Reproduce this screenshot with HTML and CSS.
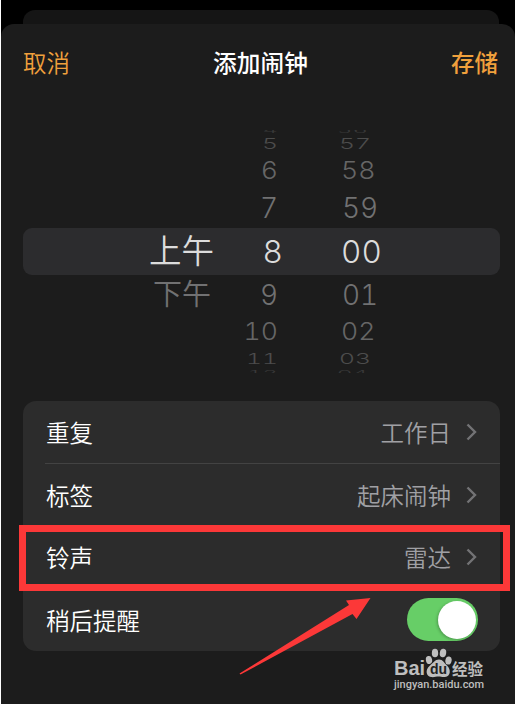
FILE: index.html
```html
<!DOCTYPE html>
<html lang="zh-CN">
<head>
    <meta charset="UTF-8">
    <title>添加闹钟</title>
    <link rel="stylesheet" href="styles.css">
</head>
<body>
<div class="screen">
    <div class="back-sheet"></div>
    <div class="sheet">
        <div class="nav">
            <a class="cancel">取消</a>
            <h1 class="title">添加闹钟</h1>
            <a class="save">存储</a>
        </div>
        <div class="picker">
            <div class="time d4 up"><span class="noon"></span><span class="hour">4</span><span class="minute">56</span></div>
            <div class="time d3"><span class="noon"></span><span class="hour">5</span><span class="minute">57</span></div>
            <div class="time d2"><span class="noon"></span><span class="hour">6</span><span class="minute">58</span></div>
            <div class="time d1"><span class="noon"></span><span class="hour">7</span><span class="minute">59</span></div>
            <div class="time now"><span class="noon">上午</span><span class="hour">8</span><span class="minute">00</span></div>
            <div class="time d1"><span class="noon">下午</span><span class="hour">9</span><span class="minute">01</span></div>
            <div class="time d2"><span class="noon"></span><span class="hour">10</span><span class="minute">02</span></div>
            <div class="time d3"><span class="noon"></span><span class="hour">11</span><span class="minute">03</span></div>
            <div class="time d4 down"><span class="noon"></span><span class="hour">12</span><span class="minute">04</span></div>
        </div>
        <div class="list">
            <div class="item">
                <span class="label">重复</span>
                <span class="value">工作日</span>
                <svg class="more" width="12" height="18" viewBox="0 0 12 18"><path d="M1.500 1.500L9 9L1.500 16.500"/></svg>
            </div>
            <div class="item">
                <span class="label">标签</span>
                <span class="value">起床闹钟</span>
                <svg class="more" width="12" height="18" viewBox="0 0 12 18"><path d="M1.500 1.500L9 9L1.500 16.500"/></svg>
            </div>
            <div class="item">
                <span class="label">铃声</span>
                <span class="value">雷达</span>
                <svg class="more" width="12" height="18" viewBox="0 0 12 18"><path d="M1.500 1.500L9 9L1.500 16.500"/></svg>
            </div>
            <div class="item">
                <span class="label">稍后提醒</span>
                <span class="switch"><i class="knob"></i></span>
            </div>
        </div>
    </div>
    <!-- 标注 -->
    <div class="mark"></div>
    <svg class="arrow" width="134" height="78" viewBox="0 0 134 78"><path d="M0.500 76.500L1.500 77.500L113.500 17L117.500 22L131.500 1L107 3.500L110 8Z"/></svg>
    <!-- 水印 -->
    <div class="watermark">
        <div class="logo">
            <span class="bai">Bai</span>
            <span class="paw">
                <svg width="27" height="30" viewBox="0 0 27 30">
                    <ellipse cx="4" cy="12" rx="3.100" ry="4" transform="rotate(-12 4 12)"/>
                    <ellipse cx="10" cy="5" rx="3.200" ry="4.300"/>
                    <ellipse cx="18" cy="5" rx="3.200" ry="4.300" transform="rotate(10 18 5)"/>
                    <ellipse cx="23.500" cy="12.500" rx="3.100" ry="4" transform="rotate(12 23.500 12.500)"/>
                    <path d="M14 11.500C18 11.500 19 15 22 17.500C26 21 26 28.500 20 29C17 29.300 16 28.500 13.500 28.500C11 28.500 9 29.500 6 29C1 28 0 22 4.500 18C8 15 10 11.500 14 11.500Z"/>
                </svg>
                <b class="du">du</b>
            </span>
            <span class="jingyan">经验</span>
        </div>
        <div class="url">jingyan.baidu.com</div>
    </div>
</div>
</body>
</html>
```

FILE: styles.css
```css
* {
    margin: 0;
    padding: 0;
    box-sizing: border-box;
}
body {
    background-color: #fff;
    font-family: "Noto Sans CJK SC", sans-serif;
}
.screen {
    position: relative;
    height: 704px;
    margin-left: 1px;
    padding-top: 10px;
    background-color: #000;
    overflow: hidden;
}
.back-sheet {
    height: 14px;
    margin: 0 16px 0 22px;
    border-radius: 12px 12px 0 0;
    background-color: #151515;
}
.sheet {
    height: 680px;
    padding: 0 15px 0 22px;
    border-radius: 13px 13px 0 0;
    background-color: #1c1c1c;
}
.nav {
    display: flex;
    justify-content: space-between;
    align-items: center;
    height: 75px;
    padding-right: 2px;
    font-size: 23.5px;
}
.cancel {
    color: #f0a03c;
    font-weight: 350;
}
.title {
    color: #fff;
    font-size: 23.7px;
    font-weight: 500;
}
.save {
    color: #f0a03c;
    font-weight: 500;
}
/* 时间滚轮 */
.picker {
    padding-top: 27px;
}
.time {
    display: flex;
    align-items: center;
    color: #717172;
    font-family: Inter, "Noto Sans CJK SC", sans-serif;
    font-size: 28px;
    font-weight: 350;
    font-variant-numeric: tabular-nums;
    overflow: hidden;
}
.time span {
    flex: none;
    line-height: 40px;
    white-space: nowrap;
}
.noon {
    width: 188px;
    font-size: 29px;
    text-align: right;
}
.hour {
    width: 67px;
    text-align: right;
    transform-origin: right center;
}
.minute {
    margin-left: 64px;
    transform-origin: left center;
}
.now {
    height: 47px;
    border-radius: 9px;
    background-color: #2c2c2e;
    color: #dcdcdc;
    font-size: 31.5px;
}
.now .noon {
    width: 191px;
    font-size: 32.5px;
}
.now .hour {
    width: 69px;
}
.now .minute {
    margin-left: 58px;
}
.d1 {
    height: 40px;
}
.d2 {
    height: 34px;
    color: #666;
}
.d2 span {
    transform: scale(.95, .84);
}
.d3 {
    height: 20px;
    color: #4c4c4c;
}
.d3 span {
    transform: scale(.88, .52);
}
.d4 {
    height: 8px;
    color: #383838;
}
.d4 span {
    transform: scale(.85, .26);
}
.d2 .minute {
    margin-left: 63px;
}
.d3 .minute {
    margin-left: 61px;
}
.d4 .minute {
    margin-left: 59px;
}
/* 滚轮边缘只露出一半 */
.up {
    clip-path: inset(4px 0 0 0);
}
.down {
    clip-path: inset(0 0 4px 0);
}
/* 设置列表 */
.list {
    height: 250px;
    margin-top: 24px;
    border-radius: 13px;
    background-color: #2c2c2c;
}
.item {
    display: flex;
    align-items: center;
    height: 62.4px;
    margin-left: 22px;
    padding-right: 22px;
    font-size: 23.5px;
    font-weight: 350;
}
.item + .item {
    border-top: 1px solid #434343;
}
.label {
    flex: 1;
    padding-left: 1px;
    color: #fff;
}
.value {
    color: #a0a0a4;
}
.more {
    margin-left: 15px;
    fill: none;
    stroke: #737375;
    stroke-width: 2.4;
}
.switch {
    display: flex;
    justify-content: flex-end;
    width: 71px;
    height: 43px;
    padding: 2.5px;
    border-radius: 22px;
    background-color: #67ce67;
}
.knob {
    width: 38px;
    height: 38px;
    border-radius: 50%;
    background-color: #fff;
    box-shadow: -1px 1px 3px rgba(0, 0, 0, .25);
}
.mark {
    position: absolute;
    left: 18px;
    top: 525px;
    width: 491px;
    height: 66px;
    border: 7px solid #fc3838;
}
.arrow {
    position: absolute;
    left: 238px;
    top: 597px;
    fill: #fc3838;
}
.watermark {
    position: absolute;
    left: 393px;
    top: 648px;
    color: #bebebe;
}
.logo {
    display: flex;
    align-items: flex-end;
    height: 30px;
}
.bai {
    width: 31px;
    font: bold 20px/20px "Liberation Sans", sans-serif;
}
.paw {
    position: relative;
    width: 27px;
    height: 30px;
    fill: #bebebe;
}
.du {
    position: absolute;
    left: 5px;
    top: 13px;
    color: #222;
    font: bold 14px/16px "Liberation Sans", sans-serif;
}
.jingyan {
    font-size: 15.5px;
    font-weight: bold;
    line-height: 20px;
}
.url {
    font: 500 11px/14px Roboto, sans-serif;
}
```
